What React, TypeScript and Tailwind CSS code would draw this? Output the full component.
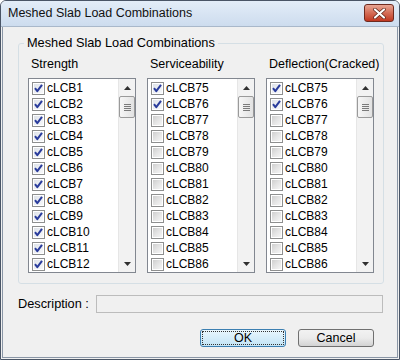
import React from 'react';

type Item = { name: string; checked: boolean };

const strength: Item[] = Array.from({ length: 12 }, (_, i) => ({ name: `cLCB${i + 1}`, checked: true }));
const service: Item[] = Array.from({ length: 12 }, (_, i) => ({ name: `cLCB${i + 75}`, checked: i < 2 }));
const deflection: Item[] = Array.from({ length: 12 }, (_, i) => ({ name: `cLCB${i + 75}`, checked: i < 2 }));

const CheckBox = ({ checked }: { checked: boolean }) => (
  <div className="w-[13px] h-[13px] border border-[#8e8f8f] bg-white p-[1px] shrink-0">
    <div
      className={`w-full h-full relative ${
        checked
          ? 'bg-gradient-to-br from-[#dfe3ea] to-[#f7f8fa]'
          : 'bg-gradient-to-br from-[#cfcfcf] via-[#e4e4e4] to-[#f5f5f5]'
      }`}
    >
      {checked && (
        <svg className="absolute -left-[1px] -top-[1px]" width="11" height="11" viewBox="0 0 11 11">
          <path d="M2 5.2 L4.3 8.2 L9 1.8" fill="none" stroke="#2a3c9c" strokeWidth="2" strokeLinejoin="round" />
        </svg>
      )}
    </div>
  </div>
);

const ScrollBar = () => (
  <div className="w-[17px] flex flex-col bg-[#f2f2f2] border-l border-[#e6e6e6]">
    <div className="h-[17px] flex items-center justify-center">
      <svg width="7" height="4" viewBox="0 0 7 4">
        <path d="M3.5 0 L7 4 L0 4 Z" fill="#303030" />
      </svg>
    </div>
    <div className="h-[22px] border border-[#9a9a9a] rounded-[2px] bg-gradient-to-r from-[#f6f6f6] to-[#e2e2e2] flex flex-col items-center justify-center gap-[1px]">
      {[0, 1, 2, 3].map(i => (
        <div key={i} className="w-[7px] h-[1px] bg-[#7a7a7a]" />
      ))}
    </div>
    <div className="flex-1" />
    <div className="h-[17px] flex items-center justify-center">
      <svg width="7" height="4" viewBox="0 0 7 4">
        <path d="M0 0 L7 0 L3.5 4 Z" fill="#303030" />
      </svg>
    </div>
  </div>
);

const ListColumn = ({ title, items }: { title: string; items: Item[] }) => (
  <div className="w-[108px] flex flex-col gap-[6px]">
    <div className="pl-[3px] h-[16px] leading-[16px] text-[12.5px] text-black">{title}</div>
    <div className="h-[195px] border border-[#828790] bg-white flex">
      <div className="flex-1 pt-[1px] pl-[3px]">
        {items.map(it => (
          <div key={it.name} className="h-[16px] flex items-center gap-[2px]">
            <CheckBox checked={it.checked} />
            <span className="text-[12px] leading-[16px] text-black">{it.name}</span>
          </div>
        ))}
      </div>
      <ScrollBar />
    </div>
  </div>
);

export default function App() {
  return (
    <div
      className="w-[400px] h-[360px] flex flex-col border border-[#4a5566] rounded-t-[6px] bg-[#f0f0f0] overflow-hidden"
      style={{ fontFamily: '"Liberation Sans", Arial, sans-serif' }}
    >
      {/* Title bar */}
      <div className="h-[26px] shrink-0 flex items-center justify-between pl-[7px] pr-[5px] bg-gradient-to-b from-[#e3edf8] to-[#cddcee] border-b border-[#a9b8ca]">
        <span className="text-[12.5px] text-[#111]">Meshed Slab Load Combinations</span>
        <button className="w-[30px] h-[18px] -mt-[1px] rounded-[3px] border border-[#6e2a1f] bg-gradient-to-b from-[#e8a594] via-[#d46c56] to-[#c0361f] flex items-center justify-center">
          <svg width="13" height="11" viewBox="0 0 13 11">
            <path d="M2 1.5 L11 9.5 M11 1.5 L2 9.5" stroke="#5a2318" strokeWidth="3.6" strokeLinecap="round" />
            <path d="M2 1.5 L11 9.5 M11 1.5 L2 9.5" stroke="#ffffff" strokeWidth="2.2" strokeLinecap="round" />
          </svg>
        </button>
      </div>

      {/* Body */}
      <div className="flex-1 flex flex-col pt-[8px] pl-[15px] pr-[14px] border-l border-r border-b border-[#8a96a6] ml-[1px] mr-[1px] mb-[1px]">
        <fieldset className="border border-[#d5dfe5] rounded-[3px] pb-[10px]">
          <legend className="ml-[5px] px-[3px] text-[12.75px] leading-[16px] text-black">
            Meshed Slab Load Combinations
          </legend>
          <div className="flex gap-[11px] pt-[5px] px-[9px]">
            <ListColumn title="Strength" items={strength} />
            <ListColumn title="Serviceability" items={service} />
            <ListColumn title="Deflection(Cracked)" items={deflection} />
          </div>
        </fieldset>

        <div className="flex items-center mt-[10px]">
          <span className="w-[78px] text-[12.75px] text-black">Description :</span>
          <div className="flex-1 h-[18px] border border-[#bcbcbc] bg-[#f0f0f0]" />
        </div>

        <div className="flex justify-end gap-[12px] mt-[16px] pr-[9px]">
          <button className="w-[86px] h-[18px] rounded-[3px] border border-[#3c7fb1] bg-gradient-to-b from-[#eaf6fd] to-[#c2e4f6] p-[1px] text-[12.5px] text-black">
            <div className="w-full h-full border border-dotted border-[#333] flex items-center justify-center leading-none">OK</div>
          </button>
          <button className="w-[76px] h-[18px] rounded-[3px] border border-[#707070] bg-gradient-to-b from-[#f2f2f2] via-[#ebebeb] to-[#d3d3d3] text-[12.5px] text-black flex items-center justify-center leading-none">
            Cancel
          </button>
        </div>
      </div>
    </div>
  );
}
